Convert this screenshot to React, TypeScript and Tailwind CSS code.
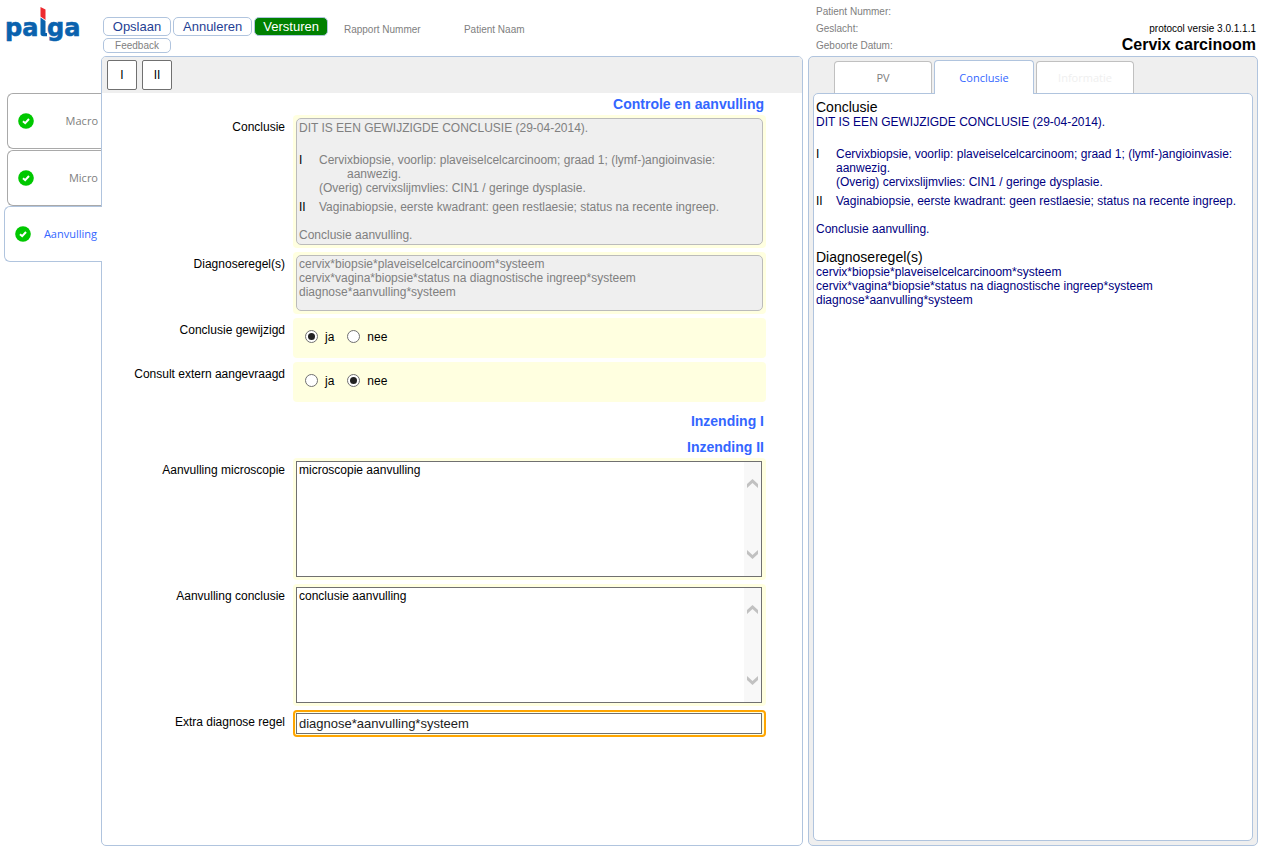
import { useState } from 'react'
import type { ReactNode } from 'react'
import clsx from 'clsx'

type Finding = {
  id: string
  lines: string[]
}

const steps = ['Macro', 'Micro', 'Aanvulling']
const tabs = ['PV', 'Conclusie', 'Informatie']
const answers = ['ja', 'nee']

const notice = 'DIT IS EEN GEWIJZIGDE CONCLUSIE (29-04-2014).'
const closing = 'Conclusie aanvulling.'

const findings: Finding[] = [
  {
    id: 'I',
    lines: [
      'Cervixbiopsie, voorlip: plaveiselcelcarcinoom; graad 1; (lymf-)angioinvasie: aanwezig.',
      '(Overig) cervixslijmvlies: CIN1 / geringe dysplasie.',
    ],
  },
  {
    id: 'II',
    lines: [
      'Vaginabiopsie, eerste kwadrant: geen restlaesie; status na recente ingreep.',
    ],
  },
]

const diagnoses = [
  'cervix*biopsie*plaveiselcelcarcinoom*systeem',
  'cervix*vagina*biopsie*status na diagnostische ingreep*systeem',
  'diagnose*aanvulling*systeem',
]

const Logo = () => (
  <svg width="84" height="44" viewBox="0 0 84 44" role="img" aria-label="palga">
    <g
      fill="#0a62ae"
      stroke="#0a62ae"
      strokeWidth="0.6"
      fontFamily="'DejaVu Sans', sans-serif"
      fontWeight="700"
      fontSize="24"
    >
      <text x="1" y="30">
        pa
      </text>
      <text x="43" y="30">
        ga
      </text>
    </g>
    <path d="M36.5 11.5 L41.5 15 V27 H43 V30.3 H39.5 Q36.5 30.3 36.5 27.5 Z" fill="#0a62ae" />
    <path d="M36.5 1 L41.5 3.5 V14 L36.5 10.5 Z" fill="#ed2a2f" />
  </svg>
)

const CheckIcon = () => (
  <svg width="16" height="16" viewBox="0 0 16 16" aria-hidden="true">
    <circle cx="8" cy="8" r="7.8" fill="#00c800" />
    <path d="M5 8.2 L7.2 10.2 L11 6" fill="none" stroke="#fff" strokeWidth="2" />
  </svg>
)

const ScrollArrow = ({ down = false }: { down?: boolean }) => (
  <svg width="11" height="9" viewBox="0 0 11 9" aria-hidden="true">
    <path
      d={down ? 'M0 0 L5.5 5 L11 0 V4 L5.5 9 L0 4 Z' : 'M0 9 L5.5 4 L11 9 V5 L5.5 0 L0 5 Z'}
      fill="#c1c1c1"
    />
  </svg>
)

const Conclusion = ({ hanging = false }: { hanging?: boolean }) => (
  <>
    <p>{notice}</p>
    <dl className="mt-[18px] flex flex-col gap-[5px]">
      {findings.map((finding) => (
        <div key={finding.id} className="flex">
          <dt className="w-5 shrink-0 text-black">{finding.id}</dt>
          <dd className="flex-1">
            {finding.lines.map((line, index) => (
              <p key={line} className={clsx(hanging && index === 0 && 'pl-7 -indent-7')}>
                {line}
              </p>
            ))}
          </dd>
        </div>
      ))}
    </dl>
    <p className="mt-3.5">{closing}</p>
  </>
)

const Diagnoses = () => (
  <>
    {diagnoses.map((diagnosis) => (
      <p key={diagnosis}>{diagnosis}</p>
    ))}
  </>
)

const SectionTitle = ({ children }: { children: ReactNode }) => (
  <h2 className="mt-2 pr-[38px] text-right text-sm leading-[14px] font-bold text-[#3366ff] first:mt-0">
    {children}
  </h2>
)

type RowProps = {
  label: string
  htmlFor?: string
  className: string
  children: ReactNode
}

const Row = ({ label, htmlFor, className, children }: RowProps) => {
  const Label = htmlFor ? 'label' : 'span'
  return (
    <div className="flex gap-2 pr-9">
      <Label htmlFor={htmlFor} className="w-[183px] shrink-0 pt-[5px] text-right">
        {label}
      </Label>
      <div className={clsx('min-w-0 flex-1 rounded', className)}>{children}</div>
    </div>
  )
}

const RadioRow = ({ label, name, initial }: { label: string; name: string; initial: string }) => {
  const [value, setValue] = useState(initial)
  return (
    <Row label={label} className="flex h-10 items-center gap-[13px] bg-[#ffffe0] pb-[3px] pl-3">
      {answers.map((answer) => (
        <label key={answer} className="flex items-center gap-[7px]">
          <input
            type="radio"
            name={name}
            checked={value === answer}
            onChange={() => setValue(answer)}
            className="flex size-[13px] appearance-none items-center justify-center rounded-full border border-[#707070] bg-white before:size-[7px] before:rounded-full checked:before:bg-[#222]"
          />
          {answer}
        </label>
      ))}
    </Row>
  )
}

const TextRow = ({ label, id, initial }: { label: string; id: string; initial: string }) => (
  <Row label={label} htmlFor={id} className="bg-[#ffffe0] py-[3px] pr-1 pl-[3px]">
    <div className="flex h-[116px] border border-[#707070] bg-white">
      <textarea
        id={id}
        defaultValue={initial}
        className="flex-1 resize-none px-0.5 pt-px outline-none"
      />
      <div className="flex w-[17px] flex-col items-center justify-between bg-[#f8f8f8] py-[17px]">
        <ScrollArrow />
        <ScrollArrow down />
      </div>
    </div>
  </Row>
)

const Header = () => (
  <header className="flex h-14 pr-[7px] text-[10px] leading-[17px] text-[#808080]">
    <div className="w-[101px] shrink-0 pt-1.5 pl-1">
      <Logo />
    </div>
    <div className="flex flex-1 pt-[17px] pl-0.5">
      <div className="flex flex-col items-start gap-0.5">
        <div className="flex gap-0.5 text-[13px]">
          <button className="h-[19px] rounded-[5px] border border-[#b0c4de] px-2 text-[#1f3f94] min-w-[68px]">
            Opslaan
          </button>
          <button className="h-[19px] rounded-[5px] border border-[#b0c4de] px-[9px] text-[#1f3f94]">
            Annuleren
          </button>
          <button className="h-[19px] rounded-[5px] border border-[#b0c4de] bg-[#008000] px-[8px] text-white">
            Versturen
          </button>
        </div>
        <button className="h-[15px] w-[68px] rounded-[5px] border border-[#b0c4de] leading-[13px]">
          Feedback
        </button>
      </div>
      <span className="ml-4 w-[120px] pt-1">Rapport Nummer</span>
      <span className="pt-1">Patient Naam</span>
    </div>
    <div className="flex w-[450px] shrink-0 justify-between pt-[3px] pr-0.5 pl-2">
      <div>
        <p>Patient Nummer:</p>
        <p>Geslacht:</p>
        <p>Geboorte Datum:</p>
      </div>
      <div className="pt-[18px] text-right text-black">
        <p className="leading-4">protocol versie 3.0.1.1.1</p>
        <h1 className="text-base leading-4 font-bold">Cervix carcinoom</h1>
      </div>
    </div>
  </header>
)

const Steps = () => (
  <nav className="flex w-[101px] shrink-0 flex-col items-end pt-9 font-['Open_Sans',sans-serif] text-[11px]">
    {steps.map((step) => {
      const active = step === 'Aanvulling'
      return (
        <button
          key={step}
          className={clsx(
            'flex h-14 items-center justify-between rounded-l-md border border-r-0 bg-white pl-[10px]',
            active
              ? 'relative z-10 -mr-px w-[98px] border-[#b0c4de] pr-[5px] text-[#3366ff]'
              : 'mt-px w-[94px] border-[#a9a9a9] pr-[3px] text-[#808080]'
          )}
        >
          <CheckIcon />
          {step}
        </button>
      )
    })}
  </nav>
)

const Form = () => (
  <main className="min-w-0 flex-1 rounded-[5px] border border-[#b0c4de]">
    <div className="flex h-9 gap-[5px] rounded-t bg-[#efefef] px-[5px] py-[3px]">
      {findings.map((finding) => (
        <button
          key={finding.id}
          className="size-[30px] rounded-[2px] border border-[#707070] bg-white"
        >
          {finding.id}
        </button>
      ))}
    </div>
    <form className="flex flex-col gap-1 pt-1">
      <SectionTitle>Controle en aanvulling</SectionTitle>
      <Row label="Conclusie" className="bg-[#ffffe0] p-[3px]">
        <div className="h-[127px] rounded-[5px] border border-[#bbb] bg-[#efefef] px-0.5 pt-0.5 text-[#808080]">
          <Conclusion hanging />
        </div>
      </Row>
      <Row label="Diagnoseregel(s)" className="bg-[#ffffe0] p-[3px]">
        <div className="h-14 rounded-[5px] border border-[#bbb] bg-[#efefef] px-0.5 pt-px text-[#808080]">
          <Diagnoses />
        </div>
      </Row>
      <RadioRow label="Conclusie gewijzigd" name="gewijzigd" initial="ja" />
      <RadioRow label="Consult extern aangevraagd" name="consult" initial="nee" />
      <SectionTitle>Inzending I</SectionTitle>
      <SectionTitle>Inzending II</SectionTitle>
      <TextRow label="Aanvulling microscopie" id="microscopie" initial="microscopie aanvulling" />
      <TextRow label="Aanvulling conclusie" id="conclusie" initial="conclusie aanvulling" />
      <Row
        label="Extra diagnose regel"
        htmlFor="regel"
        className="border-2 border-[#ffa500] bg-[#ffffe0] py-px pr-0.5 pl-px"
      >
        <input
          id="regel"
          type="text"
          defaultValue="diagnose*aanvulling*systeem"
          className="block h-[21px] w-full border border-[#707070] bg-white px-0.5 text-[13px] text-[#222] outline-none"
        />
      </Row>
    </form>
  </main>
)

const Report = () => (
  <aside className="flex w-[450px] shrink-0 flex-col rounded-[5px] border border-[#b0c4de] bg-[#efefef] p-1 pt-[3px]">
    <div className="flex items-end gap-0.5 pl-[21px] font-['Open_Sans',sans-serif] text-[11px]">
      {tabs.map((tab) => (
        <button
          key={tab}
          className={clsx(
            'rounded-t border border-b-0 bg-white',
            tab === 'Conclusie'
              ? 'relative z-10 -mb-px h-[34px] w-[100px] border-[#b0c4de] text-[#3366ff]'
              : 'h-8 w-[98px] border-[#c0c0c0]',
            tab === 'PV' && 'text-[#808080]',
            tab === 'Informatie' && 'text-[#efefef]'
          )}
        >
          {tab}
        </button>
      ))}
    </div>
    <section className="flex-1 rounded-[5px] border border-[#b0c4de] bg-white px-0.5 pt-[5px] text-[#000080]">
      <h2 className="text-sm leading-4 text-black">Conclusie</h2>
      <Conclusion />
      <h2 className="mt-[13px] text-sm leading-4 text-black">Diagnoseregel(s)</h2>
      <Diagnoses />
    </section>
  </aside>
)

const App = () => (
  <div className="flex min-h-screen flex-col bg-white font-['Liberation_Sans',Arial,sans-serif] text-xs leading-[14px] text-black">
    <Header />
    <div className="flex flex-1 pr-[7px] pb-[7px]">
      <Steps />
      <Form />
      <div className="w-[5px] shrink-0" />
      <Report />
    </div>
  </div>
)

export default App
